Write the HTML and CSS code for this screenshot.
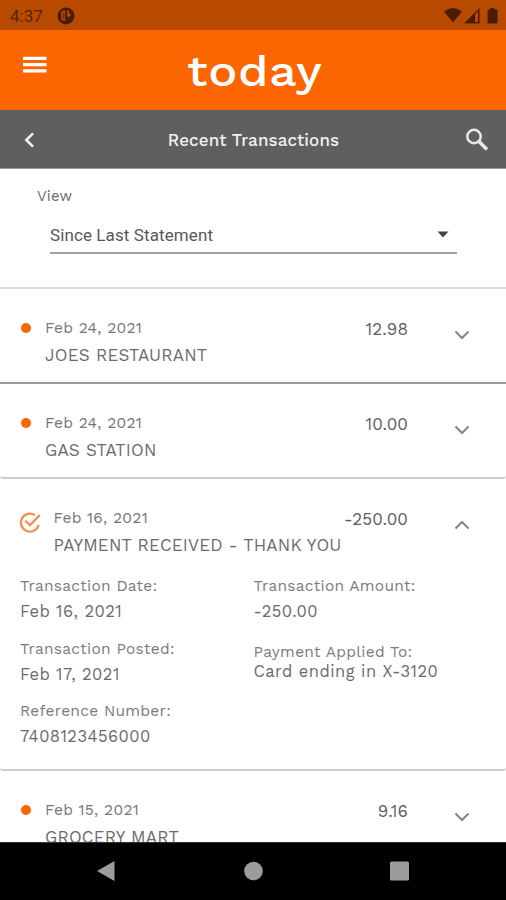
FILE: index.html
```html
<!DOCTYPE html>
<html lang="en">
<head>
<meta charset="utf-8">
<title>Recent Transactions</title>
<link rel="stylesheet" href="styles.css">
</head>
<body>
<div class="screen">
  <div class="status">
    <span class="clock">4:37</span>
    <svg class="app-dot" width="18" height="18" viewBox="0 0 18 18"><circle cx="9" cy="9" r="8.500" fill="#4a1d00"/><path d="M8.200 3.500H6.500A2.200 2.200 0 0 0 4.300 5.700V11.300A2.500 2.500 0 0 0 6.800 13.800H8.200ZM10.200 3.500H12V6.800H14A3.200 3.200 0 0 1 10.200 9.800Z" fill="#b84a00"/><path d="M6.300 5.500V12H7.300V5.500Z" fill="#4a1d00"/></svg>
    <svg class="signals" width="56" height="18" viewBox="0 0 56 18" fill="#4a1d00"><path d="M1 4.500Q10 -2.500 19 4.500L10 15.500Z"/><path fill-rule="evenodd" d="M21 16.500L36.500 1V16.500ZM32 7.200V15H35V4.200Z"/><path d="M45.200 2.500H47V1H51.500V2.500H53.300Q54.500 2.500 54.500 3.700V15.300Q54.500 16.500 53.300 16.500H45.700Q44.500 16.500 44.500 15.300V3.300Z"/></svg>
  </div>
  <header class="brand-bar">
    <svg class="menu" width="24" height="18" viewBox="0 0 24 18" fill="#fff"><path d="M0 .7H23.500V4H0ZM0 7H23.500V10.300H0ZM0 13.300H23.500V16.600H0Z"/></svg>
    <span class="brand">today</span>
  </header>
  <div class="title-bar">
    <svg class="back" width="12" height="18" viewBox="0 0 12 18" fill="none" stroke="#f1f1f1" stroke-width="2.500"><path d="M10 2.300L3.300 9L10 15.700"/></svg>
    <h1 class="title">Recent Transactions</h1>
    <svg class="search" width="24" height="24" viewBox="0 0 24 24" fill="none" stroke="#e8e8e8"><circle cx="9" cy="8.500" r="6.700" stroke-width="2.500"/><path d="M14 13.500L22 21.500" stroke-width="3.300"/></svg>
  </div>
  <section class="filter">
    <label class="filter-label">View</label>
    <div class="select"><span>Since Last Statement</span><svg width="12" height="7" viewBox="0 0 12 7"><path d="M.5 .5H11.500L6 6.500Z" fill="#444"/></svg></div>
  </section>
  <main class="list">
    <article class="row dark-edge">
      <div class="summary">
        <i class="dot"></i>
        <div class="info"><div class="date">Feb 24, 2021</div><div class="name">JOES RESTAURANT</div></div>
        <div class="amount">12.98</div>
        <svg class="chev" width="16" height="10" viewBox="0 0 16 10"><path d="M1.500 1.500L8 8L14.500 1.500"/></svg>
      </div>
    </article>
    <article class="row">
      <div class="summary">
        <i class="dot"></i>
        <div class="info"><div class="date">Feb 24, 2021</div><div class="name">GAS STATION</div></div>
        <div class="amount">10.00</div>
        <svg class="chev" width="16" height="10" viewBox="0 0 16 10"><path d="M1.500 1.500L8 8L14.500 1.500"/></svg>
      </div>
    </article>
    <article class="row expanded">
      <div class="summary">
        <svg class="check" width="22" height="22" viewBox="0 0 22 22" fill="none" stroke="#fb8a4a" stroke-width="2.200"><path d="M16 3.200A9 9 0 1 0 19.600 13"/><path d="M6.200 8.800L11 13.300L20.800 3"/></svg>
        <div class="info"><div class="date">Feb 16, 2021</div><div class="name">PAYMENT RECEIVED - THANK YOU</div></div>
        <div class="amount">-250.00</div>
        <svg class="chev" width="16" height="10" viewBox="0 0 16 10"><path d="M1.500 8.500L8 2L14.500 8.500"/></svg>
      </div>
      <div class="details">
        <dl class="col">
          <div><dt>Transaction Date:</dt><dd>Feb 16, 2021</dd></div>
          <div><dt>Transaction Posted:</dt><dd>Feb 17, 2021</dd></div>
          <div><dt>Reference Number:</dt><dd>7408123456000</dd></div>
        </dl>
        <dl class="col">
          <div><dt>Transaction Amount:</dt><dd>-250.00</dd></div>
          <div class="applied"><dt>Payment Applied To:</dt><dd>Card ending in X-3120</dd></div>
        </dl>
      </div>
    </article>
    <article class="row">
      <div class="summary">
        <i class="dot"></i>
        <div class="info"><div class="date">Feb 15, 2021</div><div class="name">GROCERY MART</div></div>
        <div class="amount">9.16</div>
        <svg class="chev" width="16" height="10" viewBox="0 0 16 10"><path d="M1.500 1.500L8 8L14.500 1.500"/></svg>
      </div>
    </article>
  </main>
  <nav class="nav">
    <svg width="20" height="22" viewBox="0 0 20 22" fill="#9c9c9c"><path d="M18.500 1V21L1 11Z"/></svg>
    <svg width="20" height="20" viewBox="0 0 20 20" fill="#9c9c9c"><circle cx="10.500" cy="10" r="9.300"/></svg>
    <svg width="20" height="20" viewBox="0 0 20 20" fill="#9c9c9c"><rect y=".5" width="19" height="19" rx="1.500"/></svg>
  </nav>
</div>
</body>
</html>
```

FILE: styles.css
```css
* { box-sizing: border-box; }
body { margin: 0; background: #fff; }
.screen {
  width: 506px; height: 900px; overflow: hidden;
  display: flex; flex-direction: column;
  font-family: "Work Sans", Inter, "Liberation Sans", sans-serif;
  font-size: 16px; color: #6b6b6b; white-space: nowrap;
}
.status { flex: none; height: 30px; background: #b84a00; display: flex; align-items: center; padding: 2px 7px 0 10px; }
.clock { font: 17px/28px Roboto, sans-serif; width: 47px; color: #5a2400; }
.signals { margin-left: auto; }
.brand-bar { flex: none; height: 80px; background: #fb6502; display: flex; padding-left: 23px; }
.menu { margin-top: 26px; }
.brand { margin: 15px 0 0 140px; font: 500 42.500px/52px "Work Sans", Inter, sans-serif; color: #fff; letter-spacing: .5px; transform-origin: left; transform: scaleX(1.145); }
.title-bar { flex: none; height: 59px; background: #5f5f5f; border-bottom: 1px solid #999; display: flex; align-items: center; justify-content: space-between; padding: 2px 17px 0 23px; }
.title { margin: 0 1px 0 8px; font-size: 17px; font-weight: 500; color: #f0f0f0; letter-spacing: .1px; }
.filter { flex: none; height: 118px; padding: 18px 49px 0 37px; }
.filter-label { display: block; font-size: 15px; line-height: 18px; letter-spacing: .1px; }
.select { margin: 14px 0 0 13px; height: 35px; border-bottom: 2px solid #a0a0a0; display: flex; align-items: center; justify-content: space-between; padding: 0 8px 2px 0; font: 17px/32px Roboto, sans-serif; letter-spacing: .1px; color: #585858; }
.list { flex: 1; min-height: 0; overflow: hidden; border-top: 2px solid #ddd; }
.row { height: 95px; border-bottom: 2px solid #ccc; border-radius: 3px; }
.dark-edge { border-bottom-color: #999; border-radius: 0; }
.expanded { height: 292px; }
.summary { display: flex; padding: 26px 36px 0 20px; height: 93px; }
.dot { width: 10px; height: 10px; margin: 8px 14px 0 1px; border-radius: 50%; background: #fb6502; }
.check { margin: 7px 12.500px 0 -1px; }
.info { flex: 1; width: 0; line-height: 27px; }
.date { font-size: 15.500px; line-height: 26px; letter-spacing: .3px; color: #777; }
.name { font-size: 17px; line-height: 28px; letter-spacing: .2px; }
.amount { font-size: 17px; line-height: 28px; color: #5e5e5e; letter-spacing: .1px; }
.chev { margin: 15px 0 0 46px; fill: none; stroke: #858585; stroke-width: 2; }
.details { display: flex; padding: 2px 0 0 20px; }
.col { margin: 0; width: 233.500px; display: flex; flex-direction: column; gap: 12px; line-height: 25.300px; }
dd { margin: 0; font-size: 16.500px; letter-spacing: .45px; }
dt { font-size: 15.500px; letter-spacing: .27px; color: #7c7c7c; }
.applied { line-height: 20px; padding-top: 5px; }
.nav { flex: none; height: 58px; background: #000; border-top: 1px solid #333; display: flex; align-items: center; justify-content: space-between; padding: 0 96px 1px; }
```
